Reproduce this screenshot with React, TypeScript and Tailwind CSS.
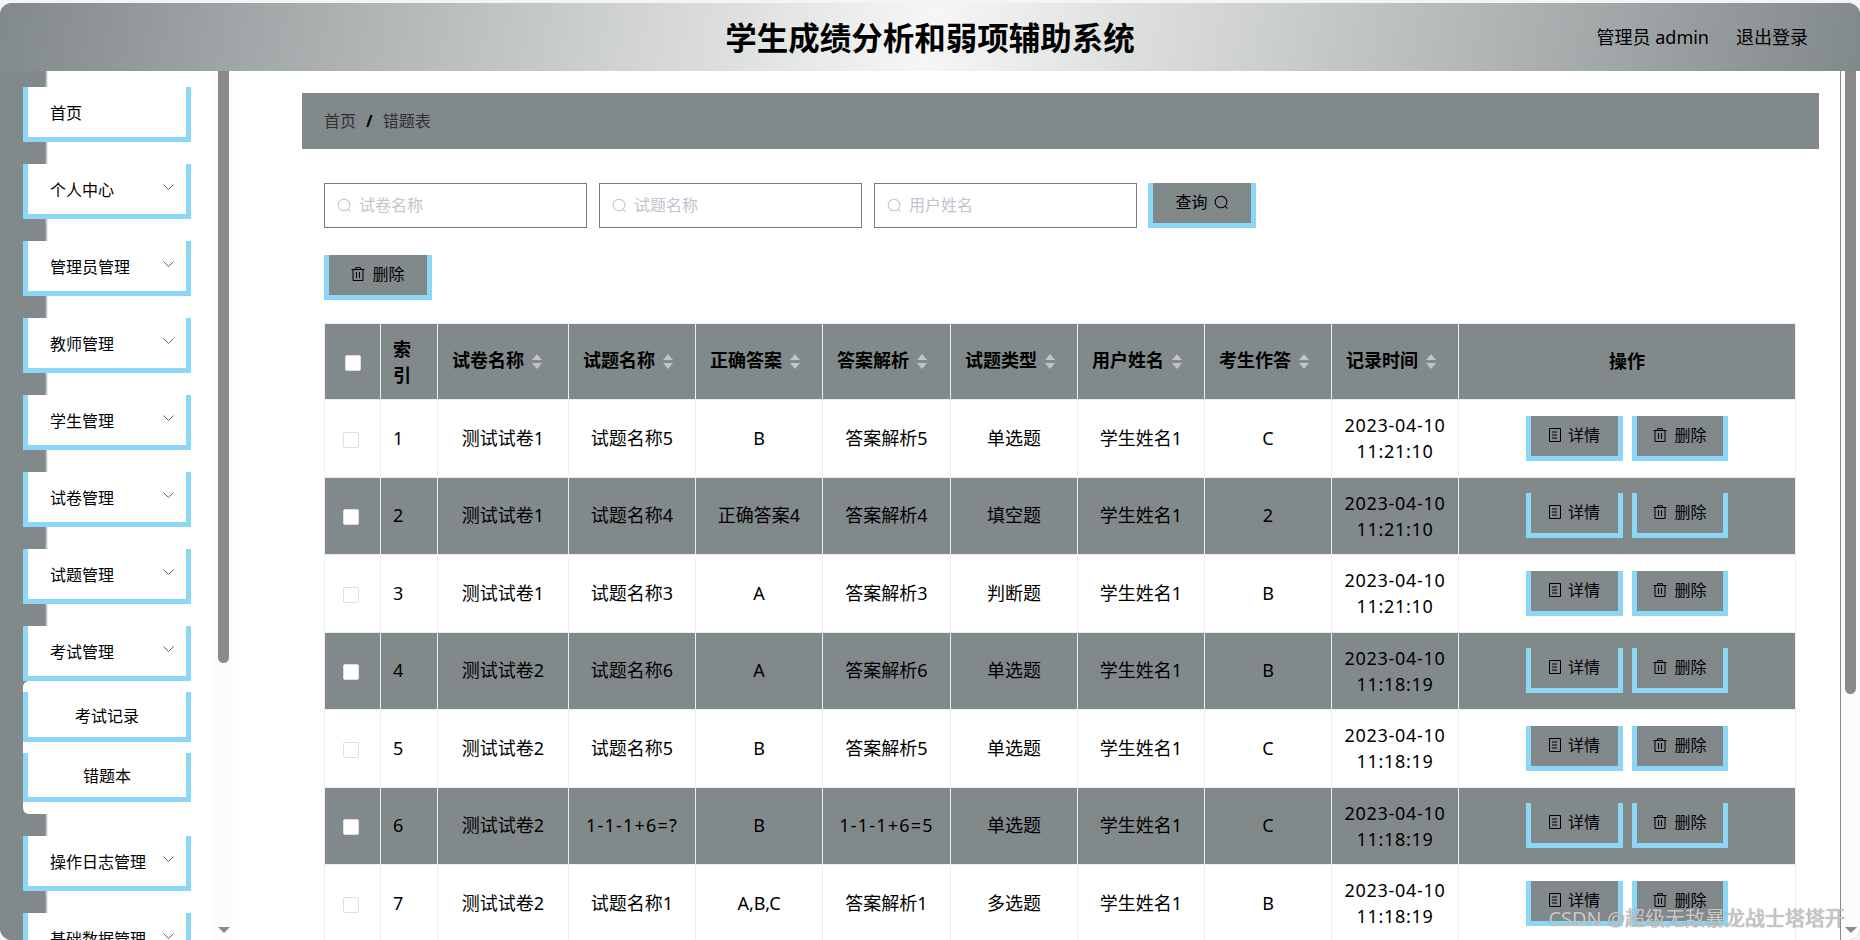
const font = '[font-family:"Noto_Sans","Noto_Sans_CJK_SC",sans-serif]';

const menus = [
  { name: "首页" },
  { name: "个人中心", arrow: true },
  { name: "管理员管理", arrow: true },
  { name: "教师管理", arrow: true },
  { name: "学生管理", arrow: true },
  { name: "试卷管理", arrow: true },
  { name: "试题管理", arrow: true },
  { name: "考试管理", arrow: true, children: ["考试记录", "错题本"] },
  { name: "操作日志管理", arrow: true },
  { name: "基础数据管理", arrow: true },
];

const columns = ["试卷名称", "试题名称", "正确答案", "答案解析", "试题类型", "用户姓名", "考生作答", "记录时间"];

const rows = [
  ["测试试卷1", "试题名称5", "B", "答案解析5", "单选题", "学生姓名1", "C", "11:21:10"],
  ["测试试卷1", "试题名称4", "正确答案4", "答案解析4", "填空题", "学生姓名1", "2", "11:21:10"],
  ["测试试卷1", "试题名称3", "A", "答案解析3", "判断题", "学生姓名1", "B", "11:21:10"],
  ["测试试卷2", "试题名称6", "A", "答案解析6", "单选题", "学生姓名1", "B", "11:18:19"],
  ["测试试卷2", "试题名称5", "B", "答案解析5", "单选题", "学生姓名1", "C", "11:18:19"],
  ["测试试卷2", "1-1-1+6=?", "B", "1-1-1+6=5", "单选题", "学生姓名1", "C", "11:18:19"],
  ["测试试卷2", "试题名称1", "A,B,C", "答案解析1", "多选题", "学生姓名1", "B", "11:18:19"],
];

function SearchIcon({ className }: { className?: string }) {
  return (
    <svg viewBox="0 0 16 16" fill="none" stroke="currentColor" strokeWidth="1.1" className={className}>
      <circle cx="7.5" cy="7.5" r="6.2" />
      <path d="M12 12l2.2 2.2" strokeLinecap="round" />
    </svg>
  );
}

function TrashIcon() {
  return (
    <svg viewBox="0 0 14 14" fill="none" stroke="currentColor" strokeWidth="1" className="h-[14px] w-[14px] shrink-0">
      <path d="M.5 2.5h13M4.5 2.5V.7h5v1.8M2 2.5v11h10v-11M5.5 5v6M8.5 5v6" />
    </svg>
  );
}

function TicketIcon() {
  return (
    <svg viewBox="0 0 12 14" fill="none" stroke="currentColor" strokeWidth="1" className="h-[14px] w-[12px] shrink-0">
      <path d="M.5.5h11v13H.5zM3 4h5M3 7h5M3 10h5" />
    </svg>
  );
}

function Arrow() {
  return (
    <svg viewBox="0 0 11 6" fill="none" stroke="#5f6266" strokeWidth="1" className="-mt-[4px] h-[6px] w-[11px]">
      <path d="M.5.5l5 5 5-5" />
    </svg>
  );
}

function Caret() {
  return (
    <span className="ml-[8px] inline-flex flex-col gap-[3px] align-middle">
      <span className="h-0 w-0 border-x-[5px] border-b-[6px] border-x-transparent border-b-[#c0c4cc]" />
      <span className="h-0 w-0 border-x-[5px] border-t-[6px] border-x-transparent border-t-[#c0c4cc]" />
    </span>
  );
}

function Scrollbar({ thumb }: { thumb: string }) {
  return (
    <div className="flex w-[19px] shrink-0 flex-col items-center bg-[#fcfcfc] pb-[7px]">
      <div className={`w-[11px] rounded-b-[6px] bg-[#8a8a8a] ${thumb}`} />
      <div className="flex-1" />
      <div className="h-0 w-0 border-x-[6px] border-t-[6px] border-x-transparent border-t-[#8a8a8a]" />
    </div>
  );
}

function MenuItem({ name, arrow }: { name: string; arrow?: boolean }) {
  return (
    <div className="ml-[23px] flex h-[55px] w-[168px] shrink-0 items-center justify-between border-x-[5px] border-b-[5px] border-[#8cd7f6] bg-white pl-[22px] pr-[12px] text-[16px] text-black">
      <span className="pt-[2px]">{name}</span>
      {arrow && <Arrow />}
    </div>
  );
}

function Sidebar() {
  return (
    <div className="flex w-[233px] shrink-0 overflow-hidden">
      <div className="flex w-[214px] flex-col gap-[22px] bg-[linear-gradient(to_right,#82898b_45px,#ffffff_48px)] pt-[16px]">
        {menus.map((m) => (
          <div key={m.name} className="flex flex-col">
            <MenuItem name={m.name} arrow={m.arrow} />
            {m.children && (
              <div className="ml-[23px] flex flex-col gap-[11px] rounded-l-[6px] bg-white pb-[12px] pt-[11px]">
                {m.children.map((c, i) => (
                  <div key={c} className={`flex w-[168px] items-center justify-center border-x-[5px] border-b-[5px] border-[#8cd7f6] bg-white pt-[2px] text-[16px] text-black ${i === 0 ? "h-[50px]" : "h-[49px]"}`}>
                    {c}
                  </div>
                ))}
              </div>
            )}
          </div>
        ))}
      </div>
      <Scrollbar thumb="h-[592px]" />
    </div>
  );
}

function SearchInput({ placeholder }: { placeholder: string }) {
  return (
    <div className="flex h-[45px] w-[263px] items-center gap-[7px] border border-[#797979] bg-white pb-[1px] pl-[12px] text-[16px] text-[#c0c4cc]">
      <SearchIcon className="h-[15px] w-[15px]" />
      <span>{placeholder}</span>
    </div>
  );
}

function ActionButton({ icon, label, filled, width }: { icon: React.ReactNode; label: string; filled: boolean; width: string }) {
  return (
    <span className={`inline-flex h-[45px] items-center justify-center gap-[7px] border-x-[5px] border-b-[5px] border-[#8cd7f6] pb-[2px] text-[16px] text-black ${width} ${filled ? "bg-[#82898b]" : ""}`}>
      {icon}
      {label}
    </span>
  );
}

function Checkbox() {
  return <span className="inline-block h-[16px] w-[16px] rounded-[2px] border border-[#dcdfe6] bg-white align-middle" />;
}

function DataTable() {
  return (
    <table className="w-[1472px] table-fixed border-collapse text-[18px] text-black">
      <colgroup>
        <col className="w-[56px]" />
        <col className="w-[57px]" />
        <col className="w-[131px]" />
        <col className="w-[127px]" />
        <col className="w-[127px]" />
        <col className="w-[128px]" />
        <col className="w-[127px]" />
        <col className="w-[127px]" />
        <col className="w-[127px]" />
        <col className="w-[127px]" />
        <col />
      </colgroup>
      <thead>
        <tr className="h-[76px] bg-[#82898b]">
          <th className="border border-[#ebeef5] text-center">
            <Checkbox />
          </th>
          <th className="border border-[#ebeef5] px-[12px] text-left font-bold leading-[26px]">索引</th>
          {columns.map((c) => (
            <th key={c} className="whitespace-nowrap border border-[#ebeef5] pb-[3px] pl-[14px] text-left font-bold">
              {c}
              <Caret />
            </th>
          ))}
          <th className="border border-[#ebeef5] text-center font-bold">操作</th>
        </tr>
      </thead>
      <tbody>
        {rows.map((r, i) => {
          const gray = i % 2 === 1;
          return (
            <tr key={i} className={`h-[77.5px] ${gray ? "bg-[#82898b]" : "bg-white"}`}>
              <td className="border border-[#ebeef5] pr-[4px] text-center">
                <Checkbox />
              </td>
              <td className="border border-[#ebeef5] px-[12px]">{i + 1}</td>
              {r.slice(0, 7).map((v, j) => (
                <td key={j} className={`whitespace-nowrap border border-[#ebeef5] text-center ${v.startsWith("1-") ? "tracking-[1.2px]" : ""}`}>
                  {v}
                </td>
              ))}
              <td className="border border-[#ebeef5] text-center leading-[26px] tracking-[0.7px]">
                2023-04-10
                <br />
                {r[7]}
              </td>
              <td className="border border-[#ebeef5] text-center">
                <div className="flex justify-center gap-[9px]">
                  <ActionButton icon={<TicketIcon />} label="详情" filled={!gray} width="w-[97px]" />
                  <ActionButton icon={<TrashIcon />} label="删除" filled={!gray} width="w-[96px]" />
                </div>
              </td>
            </tr>
          );
        })}
      </tbody>
    </table>
  );
}

export default function App() {
  return (
    <div className={`relative h-screen w-full overflow-hidden bg-[#f4f4f4] pt-[3px] ${font}`}>
      <div className="flex h-full flex-col overflow-hidden rounded-[12px] bg-[#82898b]">
        <header className="grid h-[68px] shrink-0 grid-cols-[1fr_auto_1fr] items-center bg-[linear-gradient(100deg,#82898b,#f6f6f6_50%,#82898b)]">
          <div />
          <h1 className="pt-[1px] text-[31.5px] font-bold text-black">学生成绩分析和弱项辅助系统</h1>
          <div className="flex justify-end gap-[27px] pr-[52px] text-[18px] text-black">
            <span>管理员 admin</span>
            <span>退出登录</span>
          </div>
        </header>
        <div className="flex min-h-0 flex-1">
          <Sidebar />
          <main className="min-w-0 flex-1 overflow-hidden bg-white pl-[69px] pt-[22px]">
            <div className="flex h-[56px] w-[1517px] items-center gap-[10px] bg-[#82898b] pl-[22px] text-[16px] text-[#303133]">
              <span>首页</span>
              <span className="font-bold text-black">/</span>
              <span>错题表</span>
            </div>
            <div className="pl-[22px]">
              <div className="mt-[34px] flex gap-[12px]">
                <SearchInput placeholder="试卷名称" />
                <SearchInput placeholder="试题名称" />
                <SearchInput placeholder="用户姓名" />
                <span className="-ml-[1px] inline-flex h-[45px] w-[108px] items-center justify-center gap-[6px] border-x-[5px] border-b-[5px] border-[#8cd7f6] bg-[#82898b] pb-[2px] text-[16px] text-black">
                  查询
                  <SearchIcon className="h-[15px] w-[15px]" />
                </span>
              </div>
              <div className="mt-[27px]">
                <ActionButton icon={<TrashIcon />} label="删除" filled width="w-[108px]" />
              </div>
              <div className="mt-[23px]">
                <DataTable />
              </div>
            </div>
          </main>
          <div className="flex w-[20px] shrink-0 pl-[1px]">
            <Scrollbar thumb="h-[623px]" />
          </div>
        </div>
      </div>
      <div className="absolute right-[15px] bottom-[6px] text-[20px] text-[#c9c9c9] [text-shadow:0_0_1px_#777]">
        CSDN @超级无敌暴龙战士塔塔开
      </div>
    </div>
  );
}
